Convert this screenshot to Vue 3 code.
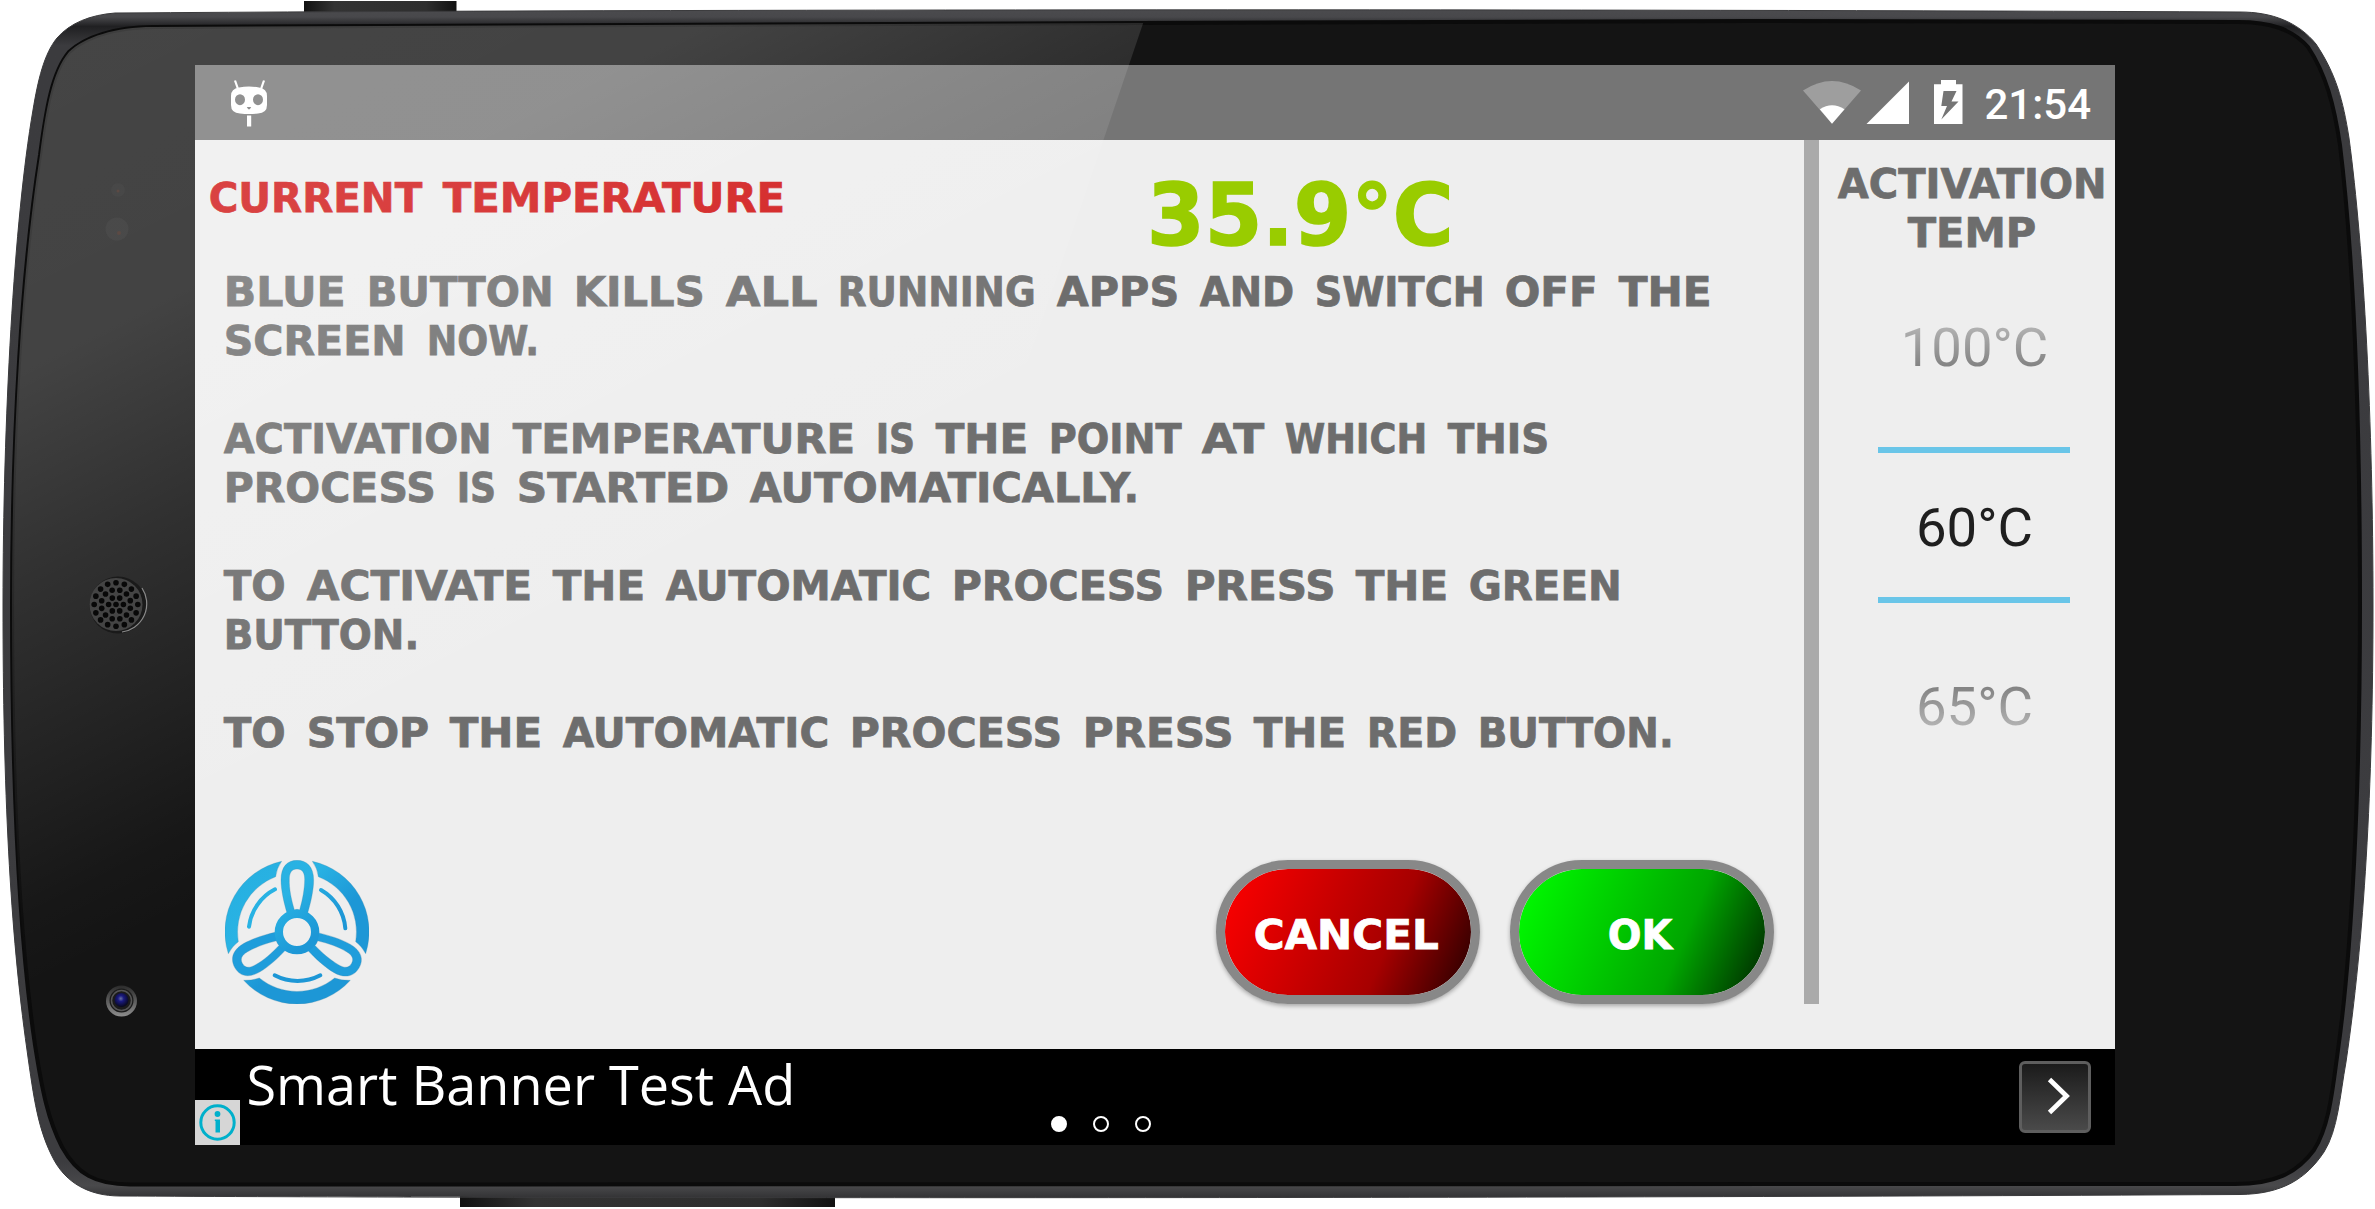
<script setup>
import { h } from 'vue'

// One word of the display face, fitted to the given width and cap height
const Word = ({ t, w, cap = 30 }) =>
  h('svg', { width: w, height: cap, style: 'overflow:visible;display:block;flex:none' }, [
    h('text', {
      x: -cap * 0.045,
      y: cap - 0.3,
      textLength: w + cap * 0.085,
      lengthAdjust: 'spacingAndGlyphs',
      'font-size': (cap * 0.98) / 0.729,
      fill: 'currentColor',
      stroke: 'currentColor',
      'stroke-width': cap * 0.025
    }, t)
  ])
Word.props = ['t', 'w', 'cap']

const title = [['CURRENT', 211], ['TEMPERATURE', 340]]

const paragraphs = [
  [
    [['BLUE', 119.5], ['BUTTON', 184.5], ['KILLS', 128.5], ['ALL', 89.5], ['RUNNING', 195.5], ['APPS', 120], ['AND', 92], ['SWITCH', 167.5], ['OFF', 90.5], ['THE', 90.5]],
    [['SCREEN', 179.5], ['NOW.', 110]]
  ],
  [
    [['ACTIVATION', 265.5], ['TEMPERATURE', 340], ['IS', 37], ['THE', 90], ['POINT', 130.5], ['AT', 60], ['WHICH', 140], ['THIS', 99]],
    [['PROCESS', 209.5], ['IS', 37], ['STARTED', 210], ['AUTOMATICALLY.', 387]]
  ],
  [
    [['TO', 59.5], ['ACTIVATE', 223], ['THE', 90], ['AUTOMATIC', 263], ['PROCESS', 210], ['PRESS', 148.5], ['THE', 90], ['GREEN', 150.5]],
    [['BUTTON.', 193]]
  ],
  [
    [['TO', 59.5], ['STOP', 120], ['THE', 90], ['AUTOMATIC', 264], ['PROCESS', 210], ['PRESS', 148.5], ['THE', 90], ['RED', 88], ['BUTTON.', 193.5]]
  ]
]

const ring = (n, r, off) =>
  Array.from({ length: n }, (_, i) => {
    const a = off + (i * 2 * Math.PI) / n
    return [117 - 1 + r * Math.cos(a), 604.5 + r * Math.sin(a)]
  })
const holes = [[116, 604.5], ...ring(6, 7.4, 0), ...ring(12, 14.8, 0.26), ...ring(16, 21.8, 0)]

const body = 'M115 13 C90 15 70 23 57 38 C44 54 38 80 33 110 C14 220 3 420 3 605 C3 790 10 930 27 1050 C34 1100 38 1130 54 1160 C66 1182 88 1196 120 1196 C480 1198 1400 1199 2240 1194.5 C2282 1194 2306 1179 2324 1152 C2338 1130 2340 1095 2346 1062 C2364 940 2373 790 2373 605 C2373 420 2364 250 2349 138 C2343 100 2336 74 2316 44 C2298 22 2272 12 2240 12 C1600 9 700 9 115 13 Z'
const glass = 'M153 27 C115 27 85 37 69 52 C52 72 46 110 40 155 C22 270 12 430 12 605 C12 780 18 930 35 1045 C42 1090 48 1120 62 1147 C77 1174 95 1184.500 130 1184.500 L2235 1184 C2275 1184 2297 1173 2314 1150 C2330 1125 2333 1085 2338 1050 C2352 950 2360 790 2360 605 C2360 420 2354 260 2340 145 C2334 105 2326 74 2308 47 C2292 29 2270 22 2238 22 L1750 21 L1140 23 L153 27 Z'
</script>

<template>
  <div class="device">
    <svg class="shell" width="2375" height="1209" viewBox="0 0 2375 1209">
      <defs>
        <linearGradient id="rim" x1="0" y1="0" x2="0" y2="1">
          <stop offset="0" stop-color="#4b4b4e" />
          <stop offset="0.006" stop-color="#48484b" />
          <stop offset="0.014" stop-color="#202022" />
          <stop offset="0.03" stop-color="#3b3b3e" />
          <stop offset="0.97" stop-color="#3c3c3f" />
          <stop offset="0.99" stop-color="#49494b" />
          <stop offset="1" stop-color="#333335" />
        </linearGradient>
        <linearGradient id="key" x1="0" y1="0" x2="1" y2="0">
          <stop offset="0" stop-color="#111" />
          <stop offset="0.2" stop-color="#333" />
          <stop offset="0.8" stop-color="#2e2e2e" />
          <stop offset="1" stop-color="#111" />
        </linearGradient>
        <linearGradient id="lens" x1="0" y1="0" x2="0" y2="1">
          <stop offset="0" stop-color="#2b2b2b" />
          <stop offset="1" stop-color="#8d8d8d" />
        </linearGradient>
        <radialGradient id="iris" cx="0.45" cy="0.4" r="0.6">
          <stop offset="0" stop-color="#6670a0" />
          <stop offset="0.35" stop-color="#1a1a80" />
          <stop offset="1" stop-color="#08081c" />
        </radialGradient>
      </defs>
      <rect x="304" y="1" width="152.500" height="14" fill="url(#key)" />
      <rect x="460" y="1192" width="375" height="15" fill="url(#key)" />
      <path :d="body" fill="url(#rim)" stroke="#3a3a3c" stroke-width="1" />
      <path :d="glass" fill="#141414" stroke="#0b0b0b" stroke-width="4" />
    </svg>

    <main class="screen">
      <header class="status">
        <svg class="mascot" width="40" height="50" viewBox="229 78 40 50">
          <path d="M235 80.500 L238 89 M264 80.500 L261 89" stroke="#fff" stroke-width="2.200" fill="none" />
          <path fill="#fff" fill-rule="evenodd" d="M239 87.500 Q249 85.500 259 87.500 Q267 88.500 267 96 V105 Q267 113 258 113.500 Q249 114.500 240 113.500 Q231 113 231 105 V96 Q231 88.500 239 87.500 Z M235 99.700 a5 5.500 0 1 0 10 0 a5 5.500 0 1 0 -10 0 Z M253 99.700 a5 5.500 0 1 0 10 0 a5 5.500 0 1 0 -10 0 Z M246.800 107 h4.400 l-1.400 2.200 h-1.600 Z" />
          <rect x="247" y="115.500" width="4.200" height="11" fill="#fff" />
        </svg>
        <div class="tray">
          <svg width="162" height="48" viewBox="1802 78 162 48">
            <path d="M1803 90.500 Q1832 71.500 1861 90.500 L1832 123.700 Z" fill="#fff" opacity=".3" />
            <path d="M1819.800 109.300 Q1832 101 1844.500 109.300 L1832 123.700 Z" fill="#fff" />
            <path d="M1909 81.500 V124 H1866.500 Z" fill="#fff" />
            <path fill="#fff" fill-rule="evenodd" d="M1941 80 H1956 V84.300 H1962.500 V124 H1934 V84.300 H1941 Z M1943.500 91 L1941.300 106 H1947 L1941.300 119.500 L1958.500 101.500 H1951.500 L1956.500 91 Z" />
          </svg>
          <span class="clock">21:54</span>
        </div>
      </header>

      <section class="content">
        <div class="main">
          <div class="heading">
            <h1 class="title"><Word v-for="[t, w] in title" :key="t" :t="t" :w="w" /></h1>
            <div class="reading"><Word t="35.9°C" :w="301" :cap="64" /></div>
          </div>
          <div class="copy">
            <div v-for="(p, i) in paragraphs" :key="i" class="para">
              <div v-for="(line, j) in p" :key="j" class="line">
                <Word v-for="([t, w], k) in line" :key="k" :t="t" :w="w" />
              </div>
            </div>
          </div>
          <div class="actions">
            <svg class="fan" width="144" height="144" viewBox="75 60 432 432">
              <defs>
                <linearGradient id="blue" gradientUnits="userSpaceOnUse" x1="150" y1="100" x2="330" y2="300">
                  <stop offset="0" stop-color="#27b0e1" />
                  <stop offset="0.45" stop-color="#29b3e4" />
                  <stop offset="1" stop-color="#1d97d6" />
                </linearGradient>
              </defs>
              <g fill="url(#blue)" stroke="#3f86a8" stroke-opacity=".55" stroke-width="1.500">
                <path d="M245 64 A216 216 0 0 0 85 341 Q97 318 115 305 A178 178 0 0 1 227 110 Q230 85 245 64 Z" />
                <path d="M337 64 A216 216 0 0 1 497 341 Q485 318 467 305 A178 178 0 0 0 355 110 Q352 85 337 64 Z" />
                <path d="M131 421 A216 216 0 0 0 451 421 Q425 422 404 414 A178 178 0 0 1 178 414 Q157 422 131 421 Z" />
                <path v-for="a in [0, 120, 240]" :key="a" :fill="a ? '#1f9ddb' : 'url(#blue)'" :transform="`rotate(${a} 291 276)`" fill-rule="evenodd" d="M262 222 C252 190 243 150 243 120 C243 80 262 61 291 61 C320 61 341 80 341 120 C341 150 332 190 322 222 Z M283 209 C274 180 267 145 268 118 C268 98 275 87 291 87 C307 87 314 98 314 118 C314 145 308 180 299 209 Q291 207 283 209 Z" />
                <path fill-rule="evenodd" d="M224 276 a67 67 0 1 0 134 0 a67 67 0 1 0 -134 0 Z M249 276 a42 42 0 1 0 84 0 a42 42 0 1 0 -84 0 Z" stroke="none" />
              </g>
              <g fill="none" stroke="url(#blue)" stroke-width="12" stroke-linecap="round">
                <path d="M225 148 A146 146 0 0 0 147 260" />
                <path d="M363 150 A146 146 0 0 1 436 265" />
                <path d="M224 406 A146 146 0 0 0 361 406" />
              </g>
            </svg>
            <div class="buttons">
              <button class="btn cancel"><Word t="CANCEL" :w="182.500" /></button>
              <button class="btn ok"><Word t="OK" :w="62" /></button>
            </div>
          </div>
        </div>
        <div class="divider"></div>
        <aside class="side">
          <div class="side-title">
            <Word t="ACTIVATION" :w="266.500" />
            <Word t="TEMP" :w="126" />
          </div>
          <div class="picker">
            <div class="opt fade-up">100°C</div>
            <div class="opt current">60°C</div>
            <div class="opt fade-down">65°C</div>
          </div>
        </aside>
      </section>

      <footer class="banner">
        <svg class="info" width="45" height="45" viewBox="0 0 45 45">
          <rect width="45" height="45" fill="#d6d6d6" />
          <circle cx="22.500" cy="22.500" r="16.700" fill="none" stroke="#00b0cb" stroke-width="3" />
          <circle cx="22.500" cy="14" r="2.900" fill="#00b0cb" />
          <path d="M19.800 19.500 H25 V32.500 H20.500 V21 H19.800 Z" fill="#00b0cb" />
        </svg>
        <span class="ad">Smart Banner Test Ad</span>
        <div class="dots"><i class="on"></i><i></i><i></i></div>
        <div class="go">
          <svg width="66" height="66" viewBox="0 0 66 66">
            <path d="M27.500 15.500 L44.500 32 L27.500 48.500" fill="none" stroke="#fff" stroke-width="4.800" />
          </svg>
        </div>
      </footer>
    </main>

    <svg class="gloss" width="2375" height="1209" viewBox="0 0 2375 1209">
      <defs>
        <clipPath id="glassClip"><path :d="glass" /></clipPath>
        <linearGradient id="shine" gradientUnits="userSpaceOnUse" x1="0" y1="0" x2="405" y2="801">
          <stop offset="0" stop-color="#fff" stop-opacity=".21" />
          <stop offset="0.38" stop-color="#fff" stop-opacity=".2" />
          <stop offset="0.6" stop-color="#fff" stop-opacity=".12" />
          <stop offset="0.8" stop-color="#fff" stop-opacity=".055" />
          <stop offset="0.92" stop-color="#fff" stop-opacity=".015" />
          <stop offset="1" stop-color="#fff" stop-opacity="0" />
        </linearGradient>
      </defs>
      <path d="M0 0 H1151 L740 1209 H0 Z" fill="url(#shine)" clip-path="url(#glassClip)" />
      <circle cx="118" cy="190" r="7" fill="#4c4c4c" opacity=".5" />
      <circle cx="117" cy="229" r="11.500" fill="#505050" opacity=".5" />
      <circle cx="118" cy="191" r="1.500" fill="#5c4a44" />
      <circle cx="119" cy="233" r="2" fill="#5c4a44" />
      <circle cx="118" cy="605" r="28.500" fill="#1a1a1a" />
      <path d="M142 588 A28.500 28.500 0 0 1 122 632" fill="none" stroke="#8a8a8a" stroke-width="1.200" />
      <circle cx="116" cy="604.500" r="26.500" fill="#444" />
      <circle v-for="([x, y], i) in holes" :key="i" :cx="x" :cy="y" r="2.800" fill="#080808" />
      <circle cx="121.500" cy="1001" r="15.500" fill="url(#lens)" />
      <circle cx="121.500" cy="1000.500" r="12" fill="#1b1b1b" />
      <circle cx="121.500" cy="1000.500" r="10" fill="none" stroke="#555" stroke-width="1.500" />
      <circle cx="121.500" cy="1000" r="7" fill="url(#iris)" />
    </svg>
  </div>
</template>

<style>
body { margin: 0; background: #fff; }
</style>

<style scoped>
.device { display: grid; width: 2375px; height: 1209px; overflow: hidden; position: relative; }
.shell { grid-area: 1 / 1; display: block; }
.gloss { position: absolute; inset: 0; z-index: 2; pointer-events: none; }
.screen {
  grid-area: 1 / 1; z-index: 1; position: relative; box-sizing: border-box;
  width: 1920px; height: 1080px; margin: 65px 0 0 195px;
  display: flex; flex-direction: column; background: #eee;
  font-family: "DejaVu Sans", sans-serif;
}

.status { height: 75px; background: #757575; display: flex; justify-content: space-between; }
.mascot { margin: 13px 0 0 34px; }
.tray { display: flex; margin-right: 24px; }
.tray svg { margin-top: 13px; }
.clock { font: 500 42px/75px Roboto, sans-serif; color: #fff; margin-left: 20px; padding-top: 2px; }

.content { height: 909px; display: flex; }
.main { width: 1609px; display: flex; flex-direction: column; font-weight: 700; }
.heading { display: flex; height: 136px; }
.title { margin: 42px 0 0 15px; display: flex; gap: 23px; color: #d01212; font-size: 41px; width: 940px; height: 30px; }
.reading { margin-top: 41px; color: #99cc00; }
.copy { padding-left: 30px; color: #6d6d6d; height: 584px; display: flex; flex-direction: column; gap: 49px; }
.line { display: flex; gap: 23px; height: 49px; }
.actions { display: flex; justify-content: space-between; padding: 0 30px; height: 144px; }
.buttons { display: flex; gap: 30px; }
.btn {
  width: 264px; height: 144px; box-sizing: border-box; padding: 4px 4px 0 0; border: 9px solid #888; border-radius: 72px;
  display: flex; align-items: center; justify-content: center; color: #fff; font: 700 41px "DejaVu Sans", sans-serif;
  box-shadow: 0 2px 4px rgba(0, 0, 0, .3);
}
.cancel { background: linear-gradient(113deg, #f80000 5%, #a60000 65%, #400000 92%) padding-box; }
.ok { background: linear-gradient(113deg, #00f800 5%, #00a600 65%, #004000 92%) padding-box; }

.divider { width: 15px; height: 864px; background: #aaa; }
.side { width: 296px; display: flex; flex-direction: column; }
.side-title { height: 157px; padding: 27.5px 0 0 10px; box-sizing: border-box; width: 296px; display: flex; flex-direction: column; gap: 19px; align-items: center; font-weight: 700; color: #6d6d6d; }
.picker { width: 192px; margin-left: 59px; display: flex; flex-direction: column; }
.opt { font: 400 54.500px/100px Roboto, sans-serif; text-align: center; height: 100px; padding-left: 1px; }
.current { box-sizing: border-box; height: 156px; line-height: 148px; margin: 50px 0; color: #1f1f1f; border: solid #69c5e8; border-width: 6px 0; }
.fade-up, .fade-down { color: transparent; -webkit-background-clip: text; background-clip: text; }
.fade-up { background-image: linear-gradient(#b8b8b8 25%, #7c7c7c 75%); }
.fade-down { margin-top: 3px; background-image: linear-gradient(#7c7c7c 25%, #b8b8b8 75%); }

.banner { height: 96px; background: #000; display: flex; position: relative; }
.info { align-self: flex-end; }
.ad { font: 400 54px/71px "Open Sans", sans-serif; color: #fff; margin-left: 6.500px; white-space: nowrap; }
.dots { position: absolute; left: 856px; top: 67px; display: flex; gap: 26px; }
.dots i { width: 16px; height: 16px; box-sizing: border-box; border: 2.500px solid #fff; border-radius: 50%; }
.dots .on { background: #fff; }
.go { margin: 12px 24px 0 auto; width: 72px; height: 72px; box-sizing: border-box; border: 3px solid #5e5e5e; border-radius: 6px; background: linear-gradient(#1b1b1b, #4a4a4a); }
.go svg { display: block; }
</style>
